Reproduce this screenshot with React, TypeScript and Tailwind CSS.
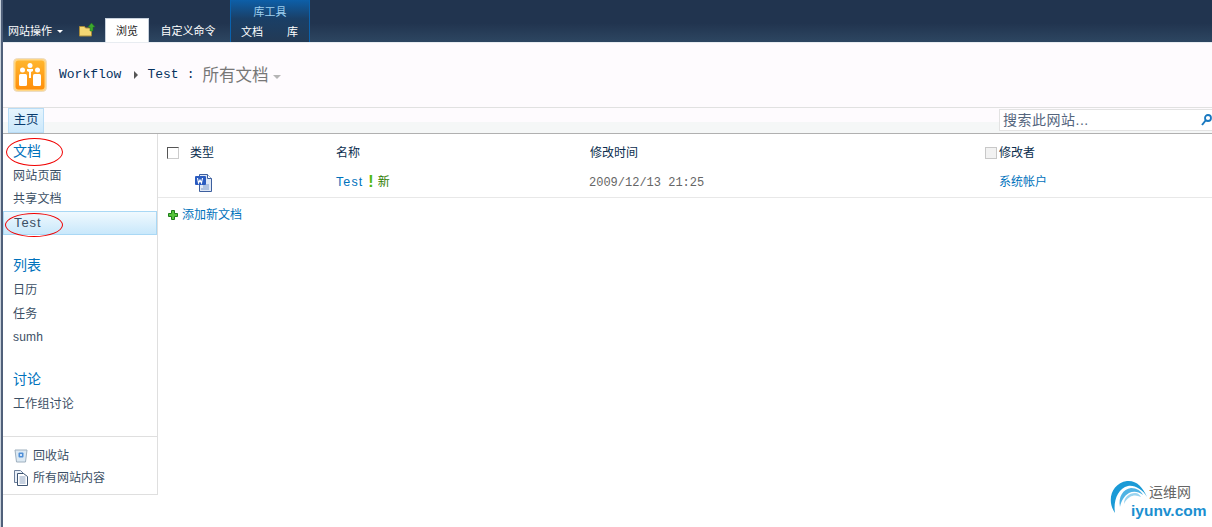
const cjk = "font-['Liberation_Sans','Noto_Sans_CJK_SC',sans-serif]";

const navGroups = [
  { title: "文档", items: ["网站页面", "共享文档", "Test"] },
  { title: "列表", items: ["日历", "任务", "sumh"] },
  { title: "讨论", items: ["工作组讨论"] },
];

const WordIcon = () => (
  <svg width="17" height="18" viewBox="0 0 17 18">
    <path d="M4.5 .5h8l4 4v13h-12z" fill="#dfe8f6" stroke="#3d5f9e" />
    <path d="M12.5 .5v4h4" fill="#fff" stroke="#3d5f9e" />
    <path d="M8 11h6M8 13h6M6 15h8" stroke="#7f9bcb" />
    <rect x="0" y="2" width="11" height="9" rx="1" fill="#2a5bc0" />
    <path d="M2.500 4l1 5 1.500-3 1.500 3 1-5" fill="none" stroke="#fff" strokeWidth="1.100" />
  </svg>
);

const SiteLogo = () => (
  <svg width="34" height="34" viewBox="0 0 34 34">
    <defs>
      <linearGradient id="logoBg" x1="0" y1="0" x2="0" y2="1">
        <stop offset="0" stopColor="#ffb52e" />
        <stop offset="1" stopColor="#ff8f0a" />
      </linearGradient>
    </defs>
    <rect x=".5" y=".5" width="33" height="33" rx="4" fill="#ffd684" stroke="#ecdcc4" />
    <rect x="2.500" y="2.500" width="29" height="29" rx="3" fill="url(#logoBg)" />
    <circle cx="17" cy="7.500" r="2.500" fill="#fff" />
    <circle cx="9.500" cy="12" r="2.500" fill="#fff" />
    <circle cx="24.500" cy="12" r="2.500" fill="#fff" />
    <path d="M14 11h6v2l-2 1v6h-2v-6l-2-1z" fill="#fff" />
    <rect x="6" y="16" width="8" height="12" rx="1.500" fill="#fff" />
    <rect x="20" y="16" width="8" height="12" rx="1.500" fill="#fff" />
  </svg>
);

const FolderUp = () => (
  <svg width="17" height="14" viewBox="0 0 17 14">
    <path d="M.5 3.500h5l1 1.500h6v8h-12z" fill="#f4d774" stroke="#a98b3a" />
    <path d="M12.500 0l3.500 4h-2v4h-3V4H9z" fill="#3da82e" stroke="#1f7a1c" strokeWidth=".5" />
  </svg>
);

const Watermark = () => (
  <div className="absolute left-[1106px] top-[480px] h-[44px] w-[103px]">
    <svg width="40" height="36" viewBox="0 0 40 36" className="absolute left-0 top-0">
      <path d="M6 33C-3 20 3 3 18 1c9-1 16 6 20 16-5-8-12-12-19-11C9 8 4 21 6 33z" fill="#1b9ad6" />
      <path d="M11 27C9 17 14 9 22 8c6 0 10 3 12 7-5-4-10-4-14-2-5 3-8 8-9 14z" fill="#4fb3e4" />
      <path d="M15 24c0-7 5-11 11-11 3 0 5 2 6 4-4-2-8-2-11 0-3 2-5 4-6 7z" fill="#9ad4f0" />
    </svg>
    <span className={`absolute left-[40px] top-[3px] text-[14px] leading-[18px] text-[#666] ${cjk}`}>运维网</span>
    <span className="absolute left-[22px] top-[21px] font-['Liberation_Sans',sans-serif] text-[15.500px] font-bold leading-[20px] text-[#1b8fd0]">iyunv.com</span>
  </div>
);

export default function App() {
  return (
    <div className="h-[527px] w-[1212px] overflow-hidden bg-[#c9d2dc] pl-px">
      <div className={`relative h-[527px] w-[1211px] overflow-hidden border-l-2 border-l-[#50607a] bg-white text-[12px] ${cjk}`}>
        {/* ribbon */}
        <div className="flex h-[42px] items-end bg-[linear-gradient(#21344f,#21344f_55%,#2d4661)] pl-[5px] text-white">
          <div className="flex h-[22px] w-[63px] items-center gap-[5px] text-[11px]">
            网站操作
            <span className="mt-px border-x-[3px] border-t-[3px] border-x-transparent border-t-white" />
          </div>
          <div className="ml-[8px] flex h-[19px] w-[24px] items-start">
            <FolderUp />
          </div>
          <div className="ml-[2px] flex h-[24px] w-[44px] items-center justify-center border-x border-t border-[#c6d0dc] bg-white pt-[2px] text-[11px] text-[#222]">
            浏览
          </div>
          <div className="flex h-[22px] w-[82px] items-center justify-center pr-[4px] text-[11px]">自定义命令</div>
          <div className="ml-[-1px] flex h-[42px] w-[80px] flex-col border-x border-x-[#0a62ae] bg-[linear-gradient(#0d5fa8,#1a3f66_45%,#233a55)] text-[11px]">
            <div className="flex h-[20px] items-center justify-center pt-[4px] text-[#9fd0ef]">库工具</div>
            <div className="flex h-[22px] items-center justify-between px-[10px] pt-[3px]">
              <span>文档</span>
              <span className="mr-[1px]">库</span>
            </div>
          </div>
        </div>

        {/* title */}
        <div className="flex h-[65px] items-center border-t border-t-[#e8ecf1] bg-[#fefbfe] pl-[10px]">
          <SiteLogo />
          <div className="ml-[12px] flex items-center font-['Liberation_Mono',monospace] text-[13px] text-[#06325e]">
            <span>Workflow</span>
            <span className="ml-[13px] border-y-[4px] border-l-[4px] border-y-transparent border-l-[#555]" />
            <span className="ml-[9px]">Test</span>
            <span className="ml-[8px]">:</span>
            <span className={`ml-[8px] text-[16.500px] text-[#777] ${cjk}`}>所有文档</span>
            <span className="ml-[5px] mt-[3px] border-x-[4px] border-t-[4px] border-x-transparent border-t-[#b5b5b5]" />
          </div>
        </div>

        {/* top nav */}
        <div className="flex h-[27px] items-stretch justify-between border-y border-t-[#e1e1e1] border-b-[#b0b0b0] bg-[linear-gradient(#fefbfe,#fefbfe_55%,#f5f7f7_55%)] pl-[5px]">
          <div className="flex w-[36px] items-center justify-center border border-[#b8dcf6] bg-[linear-gradient(#e6f4fd,#cbe8fb)] text-[12.500px] text-[#0a3c6e]">
            主页
          </div>
          <div className="mr-[-1px] mt-[1px] flex h-[22px] w-[214px] items-center justify-between border border-[#e3e3e3] bg-white pl-[3px] pr-0 text-[14px] tracking-[0.5px] text-[#54657d]">
            <span>搜索此网站...</span>
            <svg width="11" height="12" viewBox="0 0 11 12">
              <circle cx="7" cy="4" r="3" fill="none" stroke="#1878c0" strokeWidth="1.800" />
              <path d="M5 6l-4 5" stroke="#1878c0" strokeWidth="2" />
            </svg>
          </div>
        </div>

        {/* body */}
        <div className="flex items-start">
          <div className="flex h-[361px] w-[155px] shrink-0 flex-col border-r border-b border-[#dfdfdf] text-[#3b4f65]">
            <div className="flex-1 pt-[6px]">
              {navGroups.map((group) => (
                <div key={group.title} className="mb-[19.500px]">
                  <div className="flex h-[24px] items-center pb-[2px] pl-[10px] text-[14px] text-[#0072bc]">{group.title}</div>
                  {group.items.map((item) =>
                    item === "Test" ? (
                      <div
                        key={item}
                        className="flex h-[24px] items-center border border-[#a9d8f5] bg-[linear-gradient(#f0f9fe,#c9e8fb)] pl-[10px] text-[13px] tracking-[0.9px]"
                      >
                        {item}
                      </div>
                    ) : (
                      <div key={item} className="flex h-[23.500px] items-center pl-[10px] text-[12px] tracking-[0.2px]">
                        {item}
                      </div>
                    ),
                  )}
                </div>
              ))}
            </div>
            <div className="h-[58px] border-t border-t-[#dfdfdf] pl-[11px] pt-[8px]">
              <div className="flex h-[21px] items-center gap-[5px]">
                <svg width="14" height="14" viewBox="0 0 14 14">
                  <path d="M1 1h12l-1.500 12h-9z" fill="#dce9f3" stroke="#9fb0bf" />
                  <rect x="4.500" y="3.500" width="5" height="5" rx="1" fill="#4f8fd8" />
                  <path d="M6 6h2M7 5v2" stroke="#fff" />
                </svg>
                <span>回收站</span>
              </div>
              <div className="flex h-[23px] items-center gap-[5px]">
                <svg width="14" height="16" viewBox="0 0 14 16">
                  <path d="M.5.500h6l3 3v9h-9z" fill="#eaf0f8" stroke="#6d7f9b" />
                  <path d="M3.500 3.500h6l4 3v9h-10z" fill="#fff" stroke="#3e5573" />
                  <path d="M5.500 7h6M5.500 9h6M5.500 11h6M5.500 13h6" stroke="#8ea3c0" />
                </svg>
                <span>所有网站内容</span>
              </div>
            </div>
          </div>

          {/* library */}
          <div className="min-w-0 flex-1 text-[12px]">
            <div className="flex h-[37px] items-center pl-[9px] text-[#0a2d4e]">
              <span className="h-[12px] w-[12px] border border-t-[#555] border-l-[#555] border-r-[#ccc] border-b-[#ccc] bg-white" />
              <span className="ml-[11px] w-[146px]">类型</span>
              <span className="w-[254px]">名称</span>
              <span className="w-[395px]">修改时间</span>
              <span className="h-[12px] w-[12px] border border-[#c8c8c8] bg-[#f2f2f2]" />
              <span className="ml-[2px]">修改者</span>
            </div>
            <div className="flex h-[27px] items-center border-b border-b-[#e8e8e8] pb-[3px]">
              <span className="ml-[37px] w-[141px]">
                <WordIcon />
              </span>
              <span className="flex w-[253px] items-center text-[#0072bc]">
                <span className="text-[12.500px] tracking-[1.100px]">Test</span>
                <span className="ml-[5px] mb-[2px] text-[16px] font-bold leading-none text-[#4fb80e]">!</span>
                <span className="ml-[4px] mb-[2px] text-[12px] text-[#2f7d00]">新</span>
              </span>
              <span className="w-[410px] font-['Liberation_Mono',monospace] text-[12px] text-[#666]">2009/12/13 21:25</span>
              <span className="mb-[2px] text-[#0072bc]">系统帐户</span>
            </div>
            <div className="flex h-[33px] items-center pl-[10px] text-[#0072bc]">
              <svg width="10" height="10" viewBox="0 0 10 10" className="mr-[4px]">
                <path d="M3.500.5h3v3h3v3h-3v3h-3v-3h-3v-3h3z" fill="#55c43a" stroke="#1e7d1a" />
              </svg>
              添加新文档
            </div>
          </div>
        </div>

        {/* red annotation ellipses */}
        <div className="absolute left-[3px] top-[138px] h-[28px] w-[57px] rounded-[50%] border border-[#f00000]" />
        <div className="absolute left-[2px] top-[213px] h-[24px] w-[58px] rounded-[50%] border border-[#f00000]" />

        <Watermark />
      </div>
    </div>
  );
}
